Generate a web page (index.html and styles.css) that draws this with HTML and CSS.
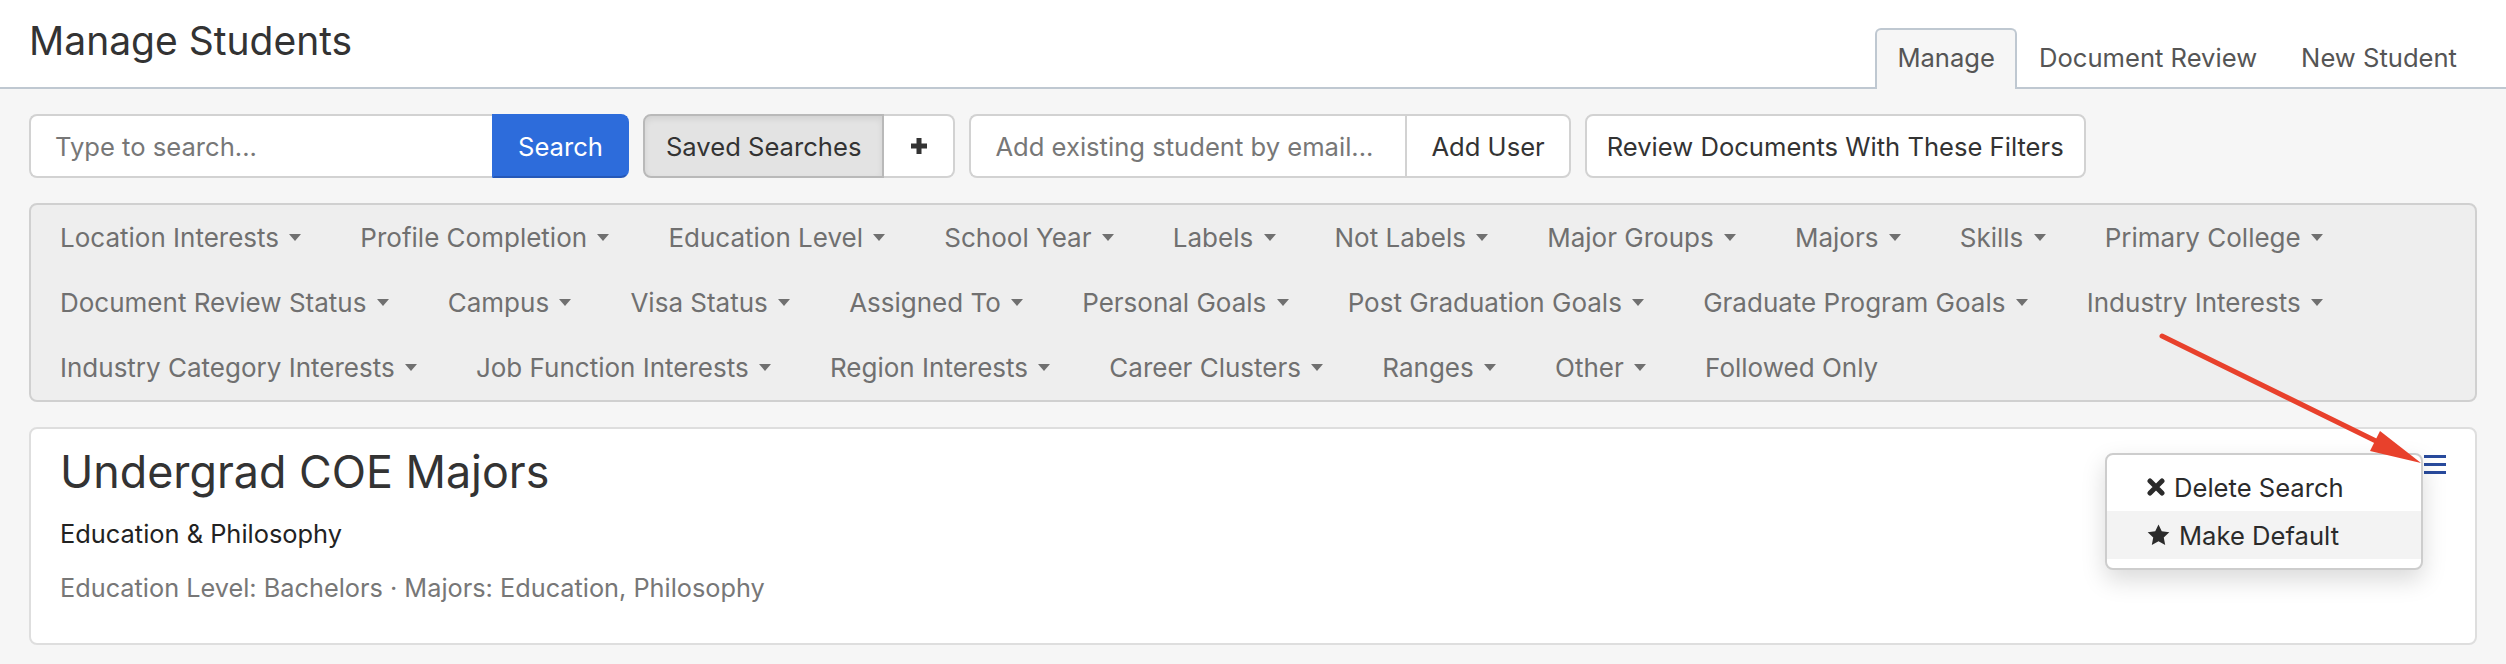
FILE: index.html
```html
<!DOCTYPE html>
<html lang="en">
<head>
    <meta charset="UTF-8">
    <meta name="viewport" content="width=device-width, initial-scale=1.0">
    <title>Manage Students</title>
    <link rel="stylesheet" href="styles.css">
</head>
<body>

    <header class="page-header">
        <h1 class="page-title">Manage Students</h1>
        <nav class="tabs">
            <a class="tab tab-active" href="#">Manage</a>
            <a class="tab" href="#">Document Review</a>
            <a class="tab" href="#">New Student</a>
        </nav>
    </header>

    <main class="content">
        <div class="toolbar">
            <div class="input-group">
                <input class="field field-search" type="text" placeholder="Type to search...">
                <button class="btn btn-primary" type="button">Search</button>
            </div>
            <div class="input-group">
                <button class="btn btn-pressed" type="button">Saved Searches</button>
                <button class="btn btn-icon" type="button" aria-label="Save search">
                    <svg width="18" height="18" viewBox="0 0 18 18"><path d="M9 1v16M1 9h16" stroke="#333" stroke-width="5"/></svg>
                </button>
            </div>
            <div class="input-group">
                <input class="field field-email" type="text" placeholder="Add existing student by email...">
                <button class="btn" type="button">Add User</button>
            </div>
            <button class="btn btn-review" type="button">Review Documents With These Filters</button>
        </div>

        <div class="filters">
            <span class="filter">Location Interests <i class="caret"></i></span>
            <span class="filter">Profile Completion <i class="caret"></i></span>
            <span class="filter">Education Level <i class="caret"></i></span>
            <span class="filter">School Year <i class="caret"></i></span>
            <span class="filter">Labels <i class="caret"></i></span>
            <span class="filter">Not Labels <i class="caret"></i></span>
            <span class="filter">Major Groups <i class="caret"></i></span>
            <span class="filter">Majors <i class="caret"></i></span>
            <span class="filter">Skills <i class="caret"></i></span>
            <span class="filter">Primary College <i class="caret"></i></span>
            <span class="filter">Document Review Status <i class="caret"></i></span>
            <span class="filter">Campus <i class="caret"></i></span>
            <span class="filter">Visa Status <i class="caret"></i></span>
            <span class="filter">Assigned To <i class="caret"></i></span>
            <span class="filter">Personal Goals <i class="caret"></i></span>
            <span class="filter">Post Graduation Goals <i class="caret"></i></span>
            <span class="filter">Graduate Program Goals <i class="caret"></i></span>
            <span class="filter">Industry Interests <i class="caret"></i></span>
            <span class="filter">Industry Category Interests <i class="caret"></i></span>
            <span class="filter">Job Function Interests <i class="caret"></i></span>
            <span class="filter">Region Interests <i class="caret"></i></span>
            <span class="filter">Career Clusters <i class="caret"></i></span>
            <span class="filter">Ranges <i class="caret"></i></span>
            <span class="filter">Other <i class="caret"></i></span>
            <span class="filter">Followed Only</span>
        </div>

        <section class="search-card">
            <h2 class="search-name">Undergrad COE Majors</h2>
            <p class="search-desc">Education &amp; Philosophy</p>
            <p class="search-criteria">Education Level: Bachelors · Majors: Education, Philosophy</p>

            <button class="menu-toggle" type="button" aria-label="Options">
                <svg width="22" height="19" viewBox="0 0 22 19"><path d="M0 1.5h22M0 9.5h22M0 17.5h22" stroke="#284a9c" stroke-width="3"/></svg>
            </button>

            <ul class="dropdown">
                <li class="dropdown-item">
                    <svg class="item-icon" width="18" height="18" viewBox="0 0 18 18"><path d="M3 3l12 12M15 3L3 15" stroke="#2b2b2b" stroke-width="5" stroke-linecap="round"/></svg>
                    Delete Search
                </li>
                <li class="dropdown-item dropdown-item-hover">
                    <svg class="item-icon" width="23" height="22" viewBox="0 0 24 23"><path d="M12 0.5l3.4 7.2 7.9 1-5.8 5.4 1.5 7.8L12 18l-7 3.9 1.5-7.8L0.7 8.7l7.9-1z" fill="#2b2b2b"/></svg>
                    Make Default
                </li>
            </ul>
        </section>
    </main>

    <!-- annotation arrow pointing at the menu toggle -->
    <svg class="annotation" width="2506" height="664" viewBox="0 0 2506 664">
        <line x1="2162" y1="336" x2="2380" y2="443" stroke="#e8412c" stroke-width="5" stroke-linecap="round"/>
        <polygon points="2421,463 2380,431 2370,451" fill="#e8412c"/>
    </svg>

</body>
</html>
```

FILE: styles.css
```css
/* Manage students page */

body {
margin: 0;
background-color: #f6f6f6;
font-family: 'Inter', 'Noto Sans', sans-serif;
font-size: 25.6px;
color: #333;
}

.page-header {
display: flex;
justify-content: space-between;
align-items: flex-start;
height: 87px;
padding: 0 27px 0 29px;
background-color: #fff;
border-bottom: 2px solid #bfc8d1;
}

.page-title {
margin: 0;
padding-top: 17px;
font-size: 39px;
font-weight: 400;
color: #333;
}

.tabs {
display: flex;
align-self: flex-end;
margin-bottom: -2px;
}

.tab {
padding: 12px 20px 16px;
border: 2px solid transparent;
border-bottom: none;
border-radius: 6px 6px 0 0;
color: #555;
text-decoration: none;
}

.tab-active {
background-color: #f6f6f6;
border-color: #bfc8d1;
}

.content {
padding: 25px 29px;
}

.toolbar {
display: flex;
gap: 14px;
height: 64px;
}

.input-group {
display: flex;
}

.field {
box-sizing: border-box;
height: 64px;
padding: 0 24px;
border: 2px solid #d2d2d2;
border-right: none;
border-radius: 8px 0 0 8px;
font-family: inherit;
font-size: 25.6px;
color: #333;
background-color: #fff;
}

.field::placeholder {
color: #777;
}

.field-search {
width: 463px;
}

.field-email {
width: 436px;
}

.btn {
box-sizing: border-box;
height: 64px;
padding: 0 24px;
border: 2px solid #d2d2d2;
border-radius: 8px;
background-color: #fff;
font-family: inherit;
font-size: 25.6px;
color: #333;
white-space: nowrap;
cursor: pointer;
}

.input-group .btn:last-child {
border-radius: 0 8px 8px 0;
}

.input-group .btn:first-child {
border-radius: 8px 0 0 8px;
}

.btn-primary {
background-color: #2d6cdb;
border-color: #2d6cdb;
border-bottom-color: #2558b8;
color: #fff;
}

.btn-pressed {
padding: 0 21px;
background-color: #e3e3e3;
border-color: #b9b9b9;
box-shadow: inset 0 3px 6px rgba(0, 0, 0, 0.08);
}

.btn-icon {
width: 71px;
padding: 0;
border-left: none;
display: flex;
align-items: center;
justify-content: center;
}

.btn-review {
padding: 0 20px;
}

.filters {
display: flex;
flex-wrap: wrap;
margin-top: 25px;
border: 2px solid #d0d0d0;
border-radius: 8px;
background-color: #eeeeee;
}

.filter {
display: flex;
align-items: center;
height: 65px;
padding: 0 30px 0 29px;
font-size: 26px;
color: #707070;
white-space: pre;
}

.caret {
width: 0;
height: 0;
margin-left: 3px;
border-left: 6px solid transparent;
border-right: 6px solid transparent;
border-top: 7px solid #707070;
}

.search-card {
position: relative;
box-sizing: border-box;
margin-top: 25px;
height: 218px;
padding: 16px 29px 0;
border: 2px solid #dedede;
border-radius: 8px;
background-color: #fff;
}

.search-name {
margin: 0;
font-size: 44.8px;
font-weight: 400;
color: #333;
}

.search-desc {
margin: 19px 0 0;
font-size: 25.4px;
color: #222;
}

.search-criteria {
margin: 23px 0 0;
font-size: 25.3px;
color: #777;
}

.menu-toggle {
position: absolute;
top: 26px;
right: 29px;
padding: 0;
border: none;
background: none;
line-height: 0;
}

.dropdown {
position: absolute;
top: 24px;
right: 52px;
width: 318px;
box-sizing: border-box;
margin: 0;
padding: 8px 0 9px;
list-style: none;
background-color: #fff;
border: 2px solid #cdcdcd;
border-radius: 8px;
box-shadow: 0 10px 24px rgba(0, 0, 0, 0.15);
}

.dropdown-item {
display: flex;
align-items: center;
gap: 9px;
height: 48px;
padding: 0 40px;
color: #2b2b2b;
}

.dropdown-item-hover {
background-color: #f3f3f3;
}

.annotation {
position: absolute;
top: 0;
left: 0;
pointer-events: none;
}
```
